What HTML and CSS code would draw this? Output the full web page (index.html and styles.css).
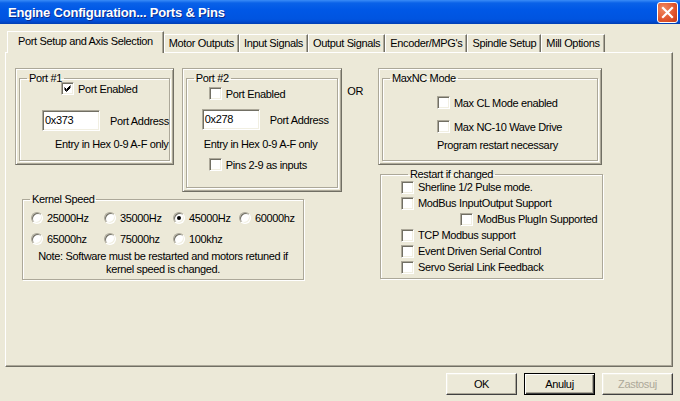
FILE: index.html
```html
<!DOCTYPE html>
<html lang="en">
<head>
    <meta charset="UTF-8">
    <title>Engine Configuration... Ports &amp; Pins</title>
    <link rel="stylesheet" href="styles.css">
</head>
<body>
    <div class="titlebar">
        <span class="title">Engine Configuration... Ports &amp; Pins</span>
        <span class="close">
            <svg width="13" height="13" viewBox="0 0 13 13"><path d="M2 2 L11 11 M11 2 L2 11" stroke="#fff" stroke-width="2.2" stroke-linecap="square"/></svg>
        </span>
    </div>

    <div class="dialog">
        <div class="tabs">
            <div class="tab active">Port Setup and Axis Selection</div>
            <div class="tab">Motor Outputs</div>
            <div class="tab">Input Signals</div>
            <div class="tab">Output Signals</div>
            <div class="tab">Encoder/MPG's</div>
            <div class="tab">Spindle Setup</div>
            <div class="tab">Mill Options</div>
        </div>

        <div class="panel">
            <div class="content">
                <div class="left">
                    <div class="ports">
                        <div class="frame port1">
                            <fieldset>
                                <legend>Port #1</legend>
                                <div class="row p1-enable"><span class="check checked"></span>Port Enabled</div>
                                <div class="row p1-addr"><span class="textbox">0x373</span>Port Address</div>
                                <div class="line p1-hex">Entry in Hex 0-9 A-F only</div>
                            </fieldset>
                        </div>
                        <div class="frame port2">
                            <fieldset>
                                <legend>Port #2</legend>
                                <div class="row p2-enable"><span class="check"></span>Port Enabled</div>
                                <div class="row p2-addr"><span class="textbox">0x278</span>Port Address</div>
                                <div class="line p2-hex">Entry in Hex 0-9 A-F only</div>
                                <div class="row p2-pins"><span class="check"></span>Pins 2-9 as inputs</div>
                            </fieldset>
                        </div>
                        <div class="or">OR</div>
                    </div>

                    <fieldset class="kernel">
                        <legend>Kernel Speed</legend>
                        <div class="speeds">
                            <div class="row"><span class="radio"></span>25000Hz</div>
                            <div class="row"><span class="radio"></span>35000Hz</div>
                            <div class="row"><span class="radio on"></span>45000Hz</div>
                            <div class="row"><span class="radio"></span>60000hz</div>
                            <div class="row"><span class="radio"></span>65000hz</div>
                            <div class="row"><span class="radio"></span>75000hz</div>
                            <div class="row"><span class="radio"></span>100khz</div>
                        </div>
                        <p class="note">Note: Software must be restarted and motors retuned if<br>kernel speed is changed.</p>
                    </fieldset>
                </div>

                <div class="right">
                    <div class="frame maxnc">
                        <fieldset>
                            <legend>MaxNC Mode</legend>
                            <div class="row m-cl"><span class="check"></span>Max CL Mode enabled</div>
                            <div class="row m-wave"><span class="check"></span>Max NC-10 Wave Drive</div>
                            <div class="line m-note">Program restart necessary</div>
                        </fieldset>
                    </div>

                    <fieldset class="restart">
                        <legend>Restart if changed</legend>
                        <div class="row"><span class="check"></span>Sherline 1/2 Pulse mode.</div>
                        <div class="row"><span class="check"></span>ModBus InputOutput Support</div>
                        <div class="row sub"><span class="check"></span>ModBus PlugIn Supported</div>
                        <div class="row"><span class="check"></span>TCP Modbus support</div>
                        <div class="row"><span class="check"></span>Event Driven Serial Control</div>
                        <div class="row"><span class="check"></span>Servo Serial Link Feedback</div>
                    </fieldset>
                </div>
            </div>
        </div>

        <div class="buttons">
            <button>OK</button>
            <button class="default">Anuluj</button>
            <button disabled>Zastosuj</button>
        </div>
    </div>
</body>
</html>
```

FILE: styles.css
```css
body {
    margin: 0;
    width: 680px;
    height: 401px;
    overflow: hidden;
    background: #ece9d8;
    font: 11px "Liberation Sans", Arial, sans-serif;
    letter-spacing: -0.35px;
    color: #000;
}

/* title bar */
.titlebar {
    height: 24px;
    display: flex;
    align-items: center;
    justify-content: space-between;
    padding: 0 2px 0 8px;
    background: linear-gradient(#3a8cf7 0, #0a62e8 3px, #0058e6 40%, #0054e0 80%, #0047cc 92%, #003db0 100%);
}
.title {
    color: #fff;
    font-weight: bold;
    font-size: 13px;
    letter-spacing: -0.2px;
    text-shadow: 1px 1px 0 #0b2a8c;
}
.close {
    width: 19px;
    height: 19px;
    border: 1px solid #fff;
    border-radius: 3px;
    background: radial-gradient(circle at 30% 30%, #f08a62, #e0542c 60%, #c43b17);
    display: flex;
    align-items: center;
    justify-content: center;
}

.dialog {
    padding: 7px 7px 0 5px;
}

/* tabs */
.tabs {
    display: flex;
    align-items: flex-end;
    height: 22px;
    padding-left: 2px;
    margin-bottom: -1px;
    position: relative;
    z-index: 1;
}
.tab {
    height: 18px;
    line-height: 17px;
    padding: 0 4px;
    margin-bottom: 1px;
    box-sizing: border-box;
    border-top: 1px solid #fff;
    border-left: 1px solid #fff;
    border-right: 1px solid #716f64;
    box-shadow: inset -1px 0 0 #aca899;
    white-space: nowrap;
}
.tab.active {
    height: 22px;
    margin-bottom: 0;
    padding: 0 10px;
    line-height: 19px;
    background: #ece9d8;
}

.panel {
    height: 315px;
    box-sizing: border-box;
    border-top: 1px solid #fff;
    border-left: 1px solid #fff;
    border-right: 1px solid #716f64;
    border-bottom: 1px solid #716f64;
    box-shadow: inset -1px -1px 0 #aca899;
}
.content {
    display: flex;
    padding: 15px 0 0 9px;
}
.left {
    width: 348px;
}
.right {
    margin-left: 15px;
    display: flex;
    flex-direction: column;
}

/* raised frame around a group */
.frame {
    box-sizing: border-box;
    display: flex;
    flex-direction: column;
    padding: 3px;
    border: 1px solid;
    border-color: #aca899 #716f64 #716f64 #aca899;
    box-shadow: inset 1px 1px 0 #fff, inset -1px -1px 0 #aca899;
}
fieldset {
    margin: 0;
    padding: 0;
    min-width: 0;
    border: 1px solid #aca899;
    box-shadow: inset 1px 1px 0 #fff, 1px 1px 0 #fff;
}
.frame fieldset {
    flex: 1;
}
legend {
    margin-left: 7px;
    padding: 0 2px;
    line-height: 12px;
}

.row {
    display: flex;
    align-items: center;
    height: 13px;
    white-space: nowrap;
}
.line {
    line-height: 13px;
    white-space: nowrap;
}

.check {
    width: 13px;
    height: 13px;
    box-sizing: border-box;
    margin-right: 4px;
    flex: none;
    background: #fff;
    border: 1px solid;
    border-color: #aca899 #fff #fff #aca899;
    box-shadow: inset 1px 1px 0 #716f64, inset -1px -1px 0 #f1efe2;
}
.check.checked {
    background: #fff url("data:image/svg+xml,%3Csvg xmlns='http://www.w3.org/2000/svg' width='11' height='11'%3E%3Cpath d='M2.5 4.5 L4.5 6.5 L8.5 2.5 M2.5 5.5 L4.5 7.5 L8.5 3.5 M2.5 6.5 L4.5 8.5 L8.5 4.5' stroke='%23000' stroke-width='1' fill='none'/%3E%3C/svg%3E") no-repeat center;
}
.radio {
    width: 12px;
    height: 12px;
    box-sizing: border-box;
    margin-right: 4px;
    flex: none;
    border-radius: 50%;
    background: #fff;
    border: 1px solid;
    border-color: #aca899 #fff #fff #aca899;
    box-shadow: inset 1px 1px 0 #716f64, inset -1px -1px 0 #f1efe2;
    display: flex;
    align-items: center;
    justify-content: center;
}
.radio.on::after {
    content: "";
    width: 4px;
    height: 4px;
    border-radius: 50%;
    background: #000;
}
.textbox {
    box-sizing: border-box;
    width: 58px;
    height: 21px;
    padding: 2px 0 0 2px;
    margin-right: 10px;
    background: #fff;
    border: 1px solid;
    border-color: #aca899 #fff #fff #aca899;
    box-shadow: inset 1px 1px 0 #716f64, inset -1px -1px 0 #f1efe2;
    line-height: 14px;
    align-self: flex-start;
}

/* port 1 */
.ports {
    display: flex;
    align-items: flex-start;
}
.port1 {
    width: 160px;
    height: 97px;
}
.p1-enable { margin: -2px 0 0 41px; }
.p1-addr { margin: 15px 0 0 22px; height: 21px; }
.p1-hex { margin: 7px 0 0 35px; }

/* port 2 */
.port2 {
    width: 162px;
    height: 124px;
    margin-left: 8px;
}
.p2-enable { margin: 3px 0 0 22px; }
.p2-addr { margin: 9px 0 0 15px; height: 21px; }
.p2-hex { margin: 8px 0 0 17px; }
.p2-pins { margin: 7px 0 0 22px; }

.or {
    margin: 17px 0 0 5px;
    line-height: 13px;
}

/* kernel speed */
.kernel {
    width: 282px;
    height: 87px;
    box-sizing: border-box;
    margin: 1px 0 0 7px;
}
.speeds {
    display: grid;
    grid-template-columns: 73px 69px 66px auto;
    grid-auto-rows: 16px;
    row-gap: 5px;
    margin: 5px 0 0 8px;
}
.speeds .row {
    height: 16px;
}
.note {
    margin: 3px 0 0;
    text-align: center;
    line-height: 13px;
}

/* maxnc */
.maxnc {
    width: 224px;
    height: 97px;
}
.m-cl { margin: 12px 0 0 54px; }
.m-wave { margin: 11px 0 0 54px; }
.m-note { margin: 6px 0 0 54px; }

/* restart */
.restart {
    width: 223px;
    height: 111px;
    box-sizing: border-box;
    margin: 3px 0 0 2px;
    padding-left: 20px;
}
.restart .row {
    height: 16px;
}
.restart .row:first-of-type {
    margin-top: -1px;
}
.restart .sub {
    margin-left: 59px;
}

/* dialog buttons */
.buttons {
    display: flex;
    justify-content: flex-end;
    gap: 7px;
    margin-top: 6px;
}
button {
    width: 71px;
    height: 22px;
    padding: 0;
    font: 11px "Liberation Sans", Arial, sans-serif;
    letter-spacing: -0.35px;
    color: #000;
    background: #ece9d8;
    border: 1px solid;
    border-color: #fff #404040 #404040 #fff;
    box-shadow: inset -1px -1px 0 #aca899, inset 1px 1px 0 #f1efe2;
}
button.default {
    border: 1px solid #000;
    box-shadow: inset 1px 1px 0 #fff, inset -1px -1px 0 #404040, inset -2px -2px 0 #aca899;
}
button:disabled {
    color: #aca899;
}
```
